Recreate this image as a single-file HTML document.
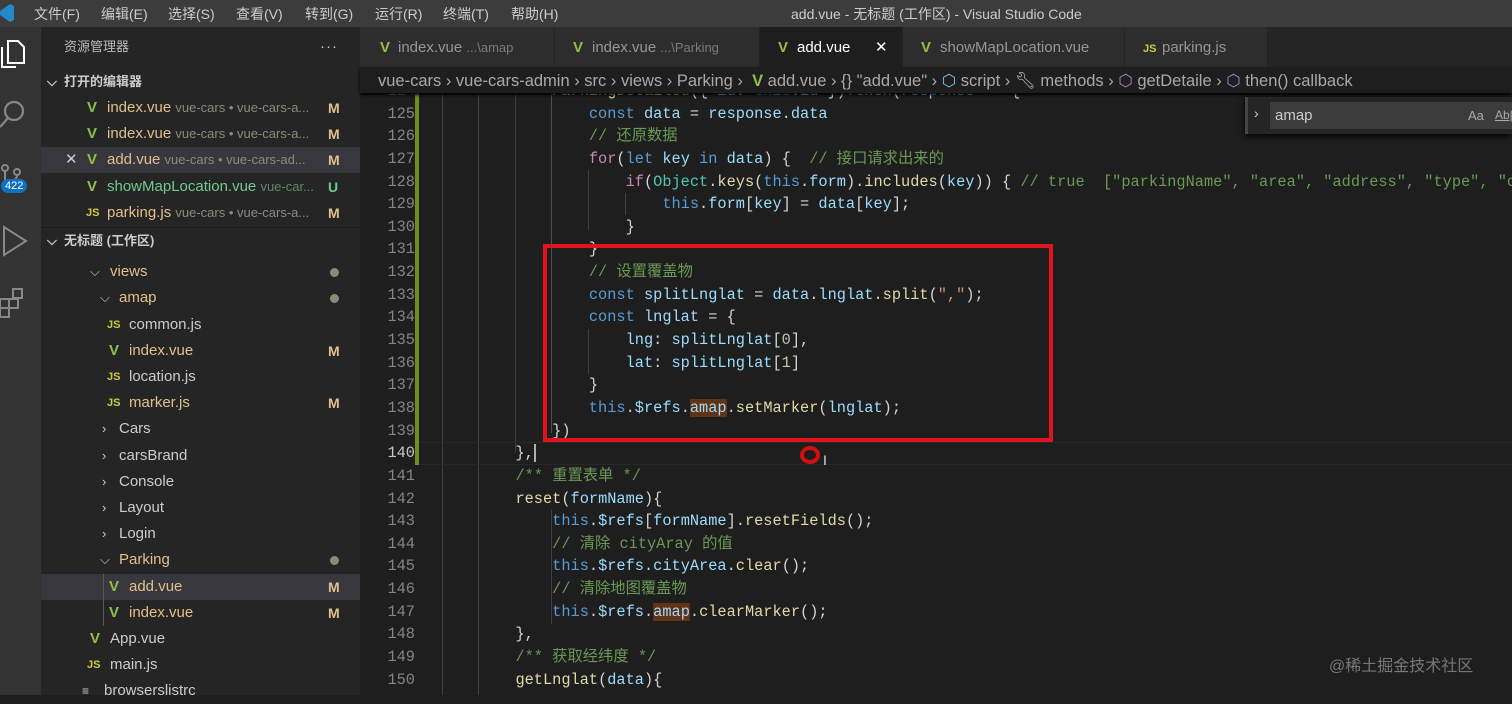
<!DOCTYPE html>
<html><head><meta charset="utf-8"><style>
*{margin:0;padding:0;box-sizing:border-box}
body{width:1512px;height:695px;overflow:hidden;background:#1e1e1e;font-family:"Liberation Sans","Noto Sans CJK SC",sans-serif;color:#ccc;position:relative}
.abs{position:absolute}
#title{left:0;top:0;width:1512px;height:27px;background:#3c3c3c;font-size:14px;color:#ccc}
#title span{position:absolute;top:4px}
#act{left:0;top:27px;width:41px;height:668px;background:#333}
#side{left:41px;top:27px;width:319px;height:668px;background:#252526;font-size:15px}
.row{position:absolute;left:0;width:319px;height:26px;line-height:26px;white-space:nowrap}
.row .t{position:absolute}
.y{color:#e2c08d}.g{color:#73c991}.d{color:#8b8b7a;font-size:13px}
.M{position:absolute;left:287px;color:#e2c08d;font-size:14px;font-weight:bold}
.dot{position:absolute;left:289px;top:9px;width:9px;height:9px;border-radius:50%;background:#8c8a75}
.js{font-size:11px;font-weight:bold;color:#cbcb41;position:absolute}
.chev{position:absolute;color:#ccc;font-size:13px}
#tabs{left:360px;top:27px;width:1152px;height:40px;background:#252526}
.tab{position:absolute;top:0;height:40px;background:#2d2d2d;font-size:15px;line-height:42px;color:#969696;white-space:nowrap;border-right:1px solid #252526}
.tab .p{font-size:13px;color:#7a7a7a}
#bc{left:360px;top:67px;width:1152px;height:26px;background:#1e1e1e;font-size:16.5px;color:#a9a9a9;line-height:28px;white-space:nowrap;z-index:3;box-shadow:0 2px 3px #000}
#gut{left:360px;top:80px;width:55px;font-family:"Liberation Mono",monospace;font-size:15.3px;line-height:22.64px;color:#858585;text-align:right}
#code{left:442px;top:80px;font-family:"Liberation Mono","Noto Sans CJK SC",monospace;font-size:15.3px;line-height:22.64px;color:#d4d4d4;white-space:pre}
.k{color:#569cd6}.v{color:#9cdcfe}.f{color:#dcdcaa}.c{color:#6a9955}.s{color:#ce9178}.p2{color:#c586c0}.cl{color:#4ec9b0}.n{color:#b5cea8}
.hl{background:#613214}
.guide{position:absolute;width:1px;background:#404040}
</style></head><body>
<div id="title" class="abs">
<svg class="abs" style="left:0;top:3px" width="14" height="20"><path d="M0 8 L10 1 L14 3 L14 17 L10 19 L0 12 Z" fill="#2489ca"/></svg>
<span style="left:34px">文件(F)</span><span style="left:101px">编辑(E)</span><span style="left:168px">选择(S)</span><span style="left:236px">查看(V)</span><span style="left:305px">转到(G)</span><span style="left:375px">运行(R)</span><span style="left:443px">终端(T)</span><span style="left:511px">帮助(H)</span>
<span style="left:791px">add.vue - 无标题 (工作区) - Visual Studio Code</span>
</div>
<div id="act" class="abs">
<svg class="abs" style="left:0;top:12px" width="30" height="32" fill="none" stroke="#fff" stroke-width="2"><path d="M8 2h10l6 6v16H8z M2 8v20h14"/></svg>
<svg class="abs" style="left:0;top:72px" width="30" height="34" fill="none" stroke="#888" stroke-width="2.2"><circle cx="14" cy="12" r="9"/><path d="M8 19 L0 28"/></svg>
<svg class="abs" style="left:0;top:136px" width="30" height="30" fill="none" stroke="#888" stroke-width="2"><circle cx="5" cy="5" r="3"/><circle cx="17" cy="9" r="3"/><path d="M5 8v14 M17 12 q0 6 -10 8"/></svg>
<div class="abs" style="left:1px;top:152px;background:#0e70c0;color:#fff;border-radius:9px;font-size:11px;padding:1px 4px">422</div>
<svg class="abs" style="left:0;top:198px" width="30" height="34" fill="none" stroke="#888" stroke-width="2"><path d="M4 2 L26 16 L4 30 Z"/></svg>
<svg class="abs" style="left:0;top:260px" width="30" height="34" fill="none" stroke="#888" stroke-width="2"><rect x="0" y="12" width="9" height="9"/><rect x="9" y="12" width="9" height="9"/><rect x="0" y="21" width="9" height="9"/><rect x="13" y="2" width="9" height="9"/></svg>
</div>
<div id="side" class="abs">
<div class="row" style="top:7px"><span class="t" style="left:23px;font-size:13px;color:#bbb">资源管理器</span><span class="t" style="left:279px;color:#ccc;letter-spacing:1px">···</span></div>
<div class="row" style="top:42px;font-weight:bold;font-size:13px"><span class="chev" style="left:6px">⌵</span><span class="t" style="left:23px">打开的编辑器</span></div>
<div class="row" style="top:68px"><span class="t" style="left:46px;color:#8dc149;font-weight:bold">V</span><span class="t y" style="left:66px">index.vue <span class="d">vue-cars • vue-cars-a...</span></span><span class="M">M</span></div>
<div class="row" style="top:94px"><span class="t" style="left:46px;color:#8dc149;font-weight:bold">V</span><span class="t y" style="left:66px">index.vue <span class="d">vue-cars • vue-cars-a...</span></span><span class="M">M</span></div>
<div class="row" style="top:120px;background:#37373d"><span class="t" style="left:24px;color:#ccc">✕</span><span class="t" style="left:46px;color:#8dc149;font-weight:bold">V</span><span class="t y" style="left:66px">add.vue <span class="d">vue-cars • vue-cars-ad...</span></span><span class="M">M</span></div>
<div class="row" style="top:147px"><span class="t" style="left:46px;color:#8dc149;font-weight:bold">V</span><span class="t g" style="left:66px">showMapLocation.vue <span class="d" style="color:#5a8a6a">vue-car...</span></span><span class="M" style="color:#73c991">U</span></div>
<div class="row" style="top:173px"><span class="js" style="left:45px">JS</span><span class="t y" style="left:66px">parking.js <span class="d">vue-cars • vue-cars-a...</span></span><span class="M">M</span></div>
<div class="row" style="top:200px;font-weight:bold;font-size:13px;border-top:1px solid #1a1a1a"><span class="chev" style="left:6px">⌵</span><span class="t" style="left:23px">无标题 (工作区)</span></div>
<div class="row" style="top:232px"><span class="chev" style="left:49px">⌵</span><span class="t y" style="left:69px">views</span><span class="dot"></span></div>
<div class="row" style="top:258px"><span class="chev" style="left:59px">⌵</span><span class="t y" style="left:78px">amap</span><span class="dot"></span></div>
<div class="row" style="top:285px"><span class="js" style="left:66px">JS</span><span class="t" style="left:88px">common.js</span></div>
<div class="row" style="top:311px"><span class="t" style="left:68px;color:#8dc149;font-weight:bold">V</span><span class="t y" style="left:88px">index.vue</span><span class="M">M</span></div>
<div class="row" style="top:337px"><span class="js" style="left:66px">JS</span><span class="t" style="left:88px">location.js</span></div>
<div class="row" style="top:363px"><span class="js" style="left:66px">JS</span><span class="t y" style="left:88px">marker.js</span><span class="M">M</span></div>
<div class="row" style="top:389px"><span class="chev" style="left:61px">›</span><span class="t" style="left:78px">Cars</span></div>
<div class="row" style="top:416px"><span class="chev" style="left:61px">›</span><span class="t" style="left:78px">carsBrand</span></div>
<div class="row" style="top:442px"><span class="chev" style="left:61px">›</span><span class="t" style="left:78px">Console</span></div>
<div class="row" style="top:468px"><span class="chev" style="left:61px">›</span><span class="t" style="left:78px">Layout</span></div>
<div class="row" style="top:494px"><span class="chev" style="left:61px">›</span><span class="t" style="left:78px">Login</span></div>
<div class="row" style="top:520px"><span class="chev" style="left:59px">⌵</span><span class="t y" style="left:78px">Parking</span><span class="dot"></span></div>
<div class="row" style="top:547px;background:#37373d"><span class="t" style="left:68px;color:#8dc149;font-weight:bold">V</span><span class="t y" style="left:88px">add.vue</span><span class="M">M</span></div>
<div class="row" style="top:573px"><span class="t" style="left:68px;color:#8dc149;font-weight:bold">V</span><span class="t y" style="left:88px">index.vue</span><span class="M">M</span></div>
<div class="abs" style="left:62px;top:547px;width:1px;height:52px;background:#585858"></div>
<div class="row" style="top:599px"><span class="t" style="left:49px;color:#8dc149;font-weight:bold">V</span><span class="t" style="left:69px;color:#ccc">App.vue</span></div>
<div class="row" style="top:625px"><span class="js" style="left:46px">JS</span><span class="t" style="left:69px">main.js</span></div>
<div class="row" style="top:651px"><span class="t" style="left:41px;font-size:12px">≡</span><span class="t" style="left:63px">browserslistrc</span></div>
</div>
<div id="tabs" class="abs">
<div class="tab" style="left:0;width:195px"><span style="position:absolute;left:20px;color:#8dc149;font-weight:bold">V</span><span style="position:absolute;left:38px">index.vue <span class="p">...\amap</span></span></div>
<div class="tab" style="left:195px;width:205px"><span style="position:absolute;left:18px;color:#8dc149;font-weight:bold">V</span><span style="position:absolute;left:37px">index.vue <span class="p">...\Parking</span></span></div>
<div class="tab" style="left:400px;width:143px;background:#1e1e1e;color:#fff"><span style="position:absolute;left:18px;color:#8dc149;font-weight:bold">V</span><span style="position:absolute;left:37px">add.vue</span><span style="position:absolute;left:115px">✕</span></div>
<div class="tab" style="left:543px;width:222px"><span style="position:absolute;left:18px;color:#8dc149;font-weight:bold">V</span><span style="position:absolute;left:37px">showMapLocation.vue</span></div>
<div class="tab" style="left:765px;width:143px"><span class="js" style="left:18px;top:1px">JS</span><span style="position:absolute;left:37px">parking.js</span></div>
</div>
<div id="bc" class="abs"><span style="position:absolute;left:18px">vue-cars › vue-cars-admin › src › views › Parking › &nbsp;<b style="color:#8dc149">V</b> add.vue › {} "add.vue" › <span style="color:#75beff">⬡</span> script › <span style="color:#ccc">🔧︎</span> methods › <span style="color:#b180d7">⬡</span> getDetaile › <span style="color:#b180d7">⬡</span> then() callback</span></div>
<div class="abs" style="left:415px;top:93px;width:4px;height:372px;background:#6d8f1e"></div>
<div class="guide" style="left:442px;top:93px;height:602px"></div>
<div class="guide" style="left:478px;top:93px;height:602px"></div>
<div class="guide" style="left:515px;top:93px;height:360px"></div>
<div class="guide" style="left:551px;top:93px;height:340px;background:#505050"></div>
<div class="guide" style="left:551px;top:510px;height:114px"></div>
<div class="guide" style="left:588px;top:170px;height:60px"></div>
<div class="guide" style="left:625px;top:193px;height:22px"></div>
<div class="guide" style="left:588px;top:329px;height:45px"></div>
<div class="abs" style="left:419px;top:442px;width:1093px;height:23px;border-top:1px solid #282828;border-bottom:1px solid #282828"></div>
<div id="gut" class="abs">124<br>125<br>126<br>127<br>128<br>129<br>130<br>131<br>132<br>133<br>134<br>135<br>136<br>137<br>138<br>139<br><span style="color:#c6c6c6">140</span><br>141<br>142<br>143<br>144<br>145<br>146<br>147<br>148<br>149<br>150</div>
<div id="code" class="abs"><div>            <span class="f">ParkingDetailed</span>({ <span class="v">id</span>: <span class="k">this</span>.<span class="v">id</span> }).<span class="f">then</span>(<span class="v">response</span> <span class="k">=&gt;</span> {</div><div>                <span class="k">const</span> <span class="v">data</span> = <span class="v">response</span>.<span class="v">data</span></div><div>                <span class="c">// 还原数据</span></div><div>                <span class="p2">for</span>(<span class="k">let</span> <span class="v">key</span> <span class="k">in</span> <span class="v">data</span>) {  <span class="c">// 接口请求出来的</span></div><div>                    <span class="p2">if</span>(<span class="cl">Object</span>.<span class="f">keys</span>(<span class="k">this</span>.<span class="v">form</span>).<span class="f">includes</span>(<span class="v">key</span>)) { <span class="c">// true  ["parkingName", "area", "address", "type", "c</span></div><div>                        <span class="k">this</span>.<span class="v">form</span>[<span class="v">key</span>] = <span class="v">data</span>[<span class="v">key</span>];</div><div>                    }</div><div>                }</div><div>                <span class="c">// 设置覆盖物</span></div><div>                <span class="k">const</span> <span class="v">splitLnglat</span> = <span class="v">data</span>.<span class="v">lnglat</span>.<span class="f">split</span>(<span class="s">","</span>);</div><div>                <span class="k">const</span> <span class="v">lnglat</span> = {</div><div>                    <span class="v">lng</span>: <span class="v">splitLnglat</span>[<span class="n">0</span>],</div><div>                    <span class="v">lat</span>: <span class="v">splitLnglat</span>[<span class="n">1</span>]</div><div>                }</div><div>                <span class="k">this</span>.<span class="v">$refs</span>.<span class="v hl">amap</span>.<span class="f">setMarker</span>(<span class="v">lnglat</span>);</div><div>            })</div><div>        },<span style="border-left:2px solid #aeafad"></span></div><div>        <span class="c">/** 重置表单 */</span></div><div>        <span class="f">reset</span>(<span class="v">formName</span>){</div><div>            <span class="k">this</span>.<span class="v">$refs</span>[<span class="v">formName</span>].<span class="f">resetFields</span>();</div><div>            <span class="c">// 清除 cityAray 的值</span></div><div>            <span class="k">this</span>.<span class="v">$refs</span>.<span class="v">cityArea</span>.<span class="f">clear</span>();</div><div>            <span class="c">// 清除地图覆盖物</span></div><div>            <span class="k">this</span>.<span class="v">$refs</span>.<span class="v hl">amap</span>.<span class="f">clearMarker</span>();</div><div>        },</div><div>        <span class="c">/** 获取经纬度 */</span></div><div>        <span class="f">getLnglat</span>(<span class="v">data</span>){</div></div>
<div class="abs" style="left:543px;top:244px;width:510px;height:198px;border:4px solid #e0141e"></div>
<div class="abs" style="left:800px;top:446px;width:20px;height:18px;border:4px solid #d01010;border-radius:50%"></div>
<div class="abs" style="left:823px;top:452px;color:#ddd;font-size:14px">I</div>
<div class="abs" style="left:1245px;top:97px;width:267px;height:37px;background:#252526;border-left:3px solid #454545;box-shadow:0 2px 6px #000;z-index:4">
<span class="abs" style="left:6px;top:8px;color:#ccc;font-size:14px">›</span>
<div class="abs" style="left:22px;top:5px;width:245px;height:27px;background:#3c3c3c;font-size:15px;line-height:27px;padding-left:5px;color:#ccc">amap<span style="position:absolute;left:198px;font-size:13px;color:#aaa">Aa</span><span style="position:absolute;left:225px;font-size:12px;color:#aaa;text-decoration:underline">Ab|</span></div>
</div>
<div class="abs" style="left:1329px;top:652px;font-size:16px;color:#777">@稀土掘金技术社区</div>
</body></html>
